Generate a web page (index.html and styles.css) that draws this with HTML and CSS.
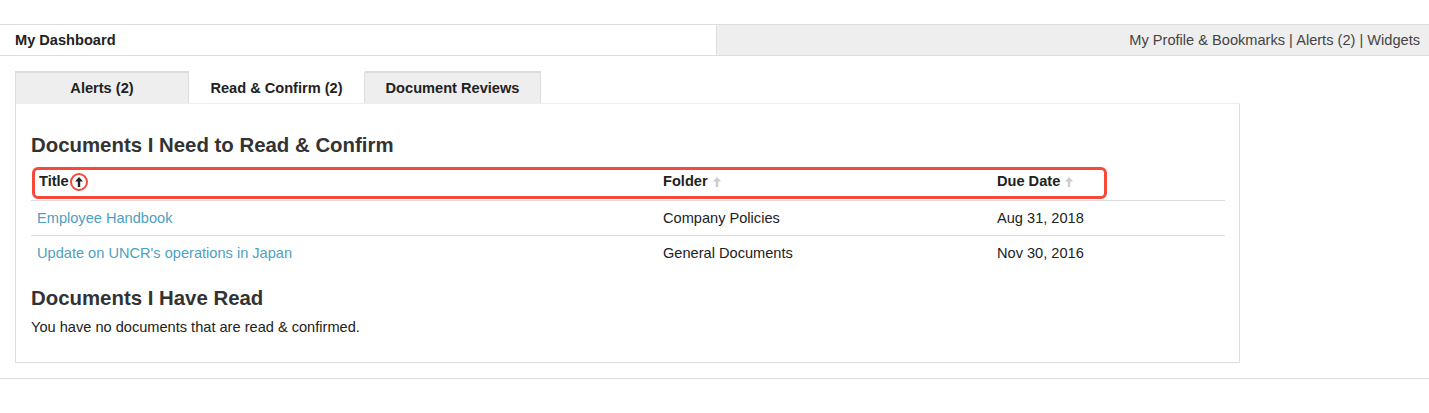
FILE: index.html
```html
<!DOCTYPE html>
<html lang="en">
  <head>
    <meta charset="UTF-8" />
    <meta name="viewport" content="width=device-width, initial-scale=1.0" />
    <title>My Dashboard</title>
    <link rel="stylesheet" href="styles.css">
  </head>
  <body>
    <div class="topbar">
      <div class="topbar-title">My Dashboard</div>
      <div class="topbar-links">
        <a href="#">My Profile &amp; Bookmarks</a> | <a href="#">Alerts (2)</a> | <a href="#">Widgets</a>
      </div>
    </div>

    <div class="tabs">
      <div class="tab">Alerts (2)</div>
      <div class="tab active">Read &amp; Confirm (2)</div>
      <div class="tab">Document Reviews</div>
    </div>

    <div class="panel">
      <h2>Documents I Need to Read &amp; Confirm</h2>
      <div class="table-wrap">
        <table class="docs">
          <colgroup>
            <col class="col-title">
            <col class="col-folder">
            <col class="col-date">
          </colgroup>
          <thead>
            <tr>
              <th>Title<span class="sort sort-active"><svg width="10" height="12" viewBox="0 0 10 12"><path d="M5 1 L1 5.5 H3.8 V11 H6.2 V5.5 H9 Z" fill="#222"/></svg></span></th>
              <th>Folder <span class="sort"><svg width="10" height="12" viewBox="0 0 10 12"><path d="M5 1 L1 5.5 H3.8 V11 H6.2 V5.5 H9 Z" fill="#ccc"/></svg></span></th>
              <th>Due Date <span class="sort"><svg width="10" height="12" viewBox="0 0 10 12"><path d="M5 1 L1 5.5 H3.8 V11 H6.2 V5.5 H9 Z" fill="#ccc"/></svg></span></th>
            </tr>
          </thead>
          <tbody>
            <tr>
              <td><a href="#">Employee Handbook</a></td>
              <td>Company Policies</td>
              <td>Aug 31, 2018</td>
            </tr>
            <tr>
              <td><a href="#">Update on UNCR's operations in Japan</a></td>
              <td>General Documents</td>
              <td>Nov 30, 2016</td>
            </tr>
          </tbody>
        </table>
        <div class="highlight"></div>
      </div>

      <h2 class="second">Documents I Have Read</h2>
      <p class="empty">You have no documents that are read &amp; confirmed.</p>
    </div>

    <div class="footer-line"></div>
  </body>
</html>
```

FILE: styles.css
```css
body {
  margin: 0;
  font-family: "Liberation Sans", Arial, sans-serif;
  font-size: 14.6px;
  color: #222;
  background-color: #fff;
}

a {
  text-decoration: none;
}

.topbar {
  display: flex;
  margin-top: 24px;
  height: 30px;
  border-top: 1px solid #ddd;
  border-bottom: 1px solid #ddd;
}

.topbar-title {
  width: 701px;
  padding-left: 15px;
  line-height: 30px;
  font-weight: bold;
  color: #222;
}

.topbar-links {
  flex: 1;
  background-color: #eee;
  border-left: 1px solid #ddd;
  text-align: right;
  padding-right: 9px;
  line-height: 30px;
  color: #444;
}

.topbar-links a {
  color: #444;
}

.tabs {
  display: flex;
  margin-top: 15px;
  padding-left: 15px;
}

.tab {
  box-sizing: border-box;
  width: 176px;
  height: 32px;
  line-height: 30px;
  text-align: center;
  font-weight: bold;
  color: #222;
  background-color: #eee;
  border-top: 2px solid #ddd;
  border-right: 1px solid #ddd;
}

.tab:first-child {
  width: 174px;
  border-left: 1px solid #ddd;
}

.tab.active {
  background-color: #fff;
  border-top-color: #fff;
}

.panel {
  box-sizing: border-box;
  width: 1225px;
  height: 260px;
  margin-left: 15px;
  padding: 30px 15px 0 15px;
  border: 1px solid #ddd;
  border-top: 1px solid #eee;
}

h2 {
  margin: 0 0 11px;
  font-size: 20.4px;
  line-height: 22px;
  color: #333;
}

h2.second {
  margin-top: 17px;
  margin-bottom: 9px;
}

.table-wrap {
  position: relative;
}

.docs {
  width: 1194px;
  table-layout: fixed;
  border-collapse: collapse;
}

.col-title {
  width: 624px;
}

.col-folder {
  width: 334px;
}

.docs th {
  height: 33px;
  box-sizing: border-box;
  padding: 6px 0 0 8px;
  line-height: 16px;
  text-align: left;
  font-weight: bold;
  color: #222;
  vertical-align: top;
}

.docs td {
  height: 34px;
  padding: 0 0 0 8px;
  border-top: 1px solid #ddd;
  vertical-align: middle;
}

.docs td a {
  color: #4f9fc0;
}

.docs td:first-child {
  padding-left: 6px;
}

.sort {
  display: inline-block;
  vertical-align: -2px;
}

.sort-active {
  box-sizing: border-box;
  width: 18px;
  height: 18px;
  margin-left: 1px;
  border: 2px solid #f4493b;
  border-radius: 50%;
  text-align: center;
  line-height: 12px;
  vertical-align: -2px;
}

.sort-active svg {
  margin-top: 1px;
}

.highlight {
  position: absolute;
  top: 0;
  left: 1px;
  width: 1075px;
  height: 32px;
  box-sizing: border-box;
  border: 3px solid #f4493b;
  border-radius: 6px;
}

.empty {
  margin: 0;
  line-height: 18px;
  color: #222;
}

.footer-line {
  margin-top: 15px;
  border-top: 1px solid #ddd;
}
```
